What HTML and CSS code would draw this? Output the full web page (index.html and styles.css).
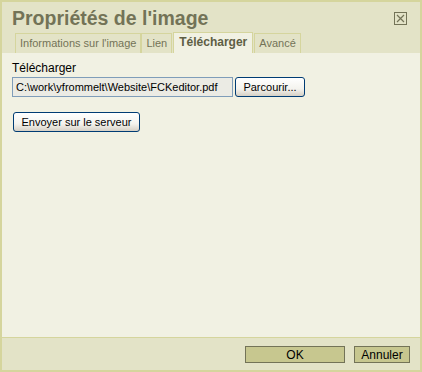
FILE: index.html
```html
<!DOCTYPE html>
<html lang="fr">
<head>
    <meta charset="UTF-8">
    <title>Propriétés de l'image</title>
    <link rel="stylesheet" href="styles.css">
</head>
<body>

    <div class="dialog">
        <div class="header">
            <h1>Propriétés de l'image</h1>
            <div class="close">
                <svg width="13" height="13" viewBox="0 0 13 13">
                    <rect x="0.5" y="0.5" width="12" height="12" fill="none" stroke="#737357"/>
                    <path d="M3 3 L10 10 M10 3 L3 10" stroke="#737357" stroke-width="1.2"/>
                </svg>
            </div>
        </div>

        <div class="tabs">
            <div class="tab">Informations sur l'image</div>
            <div class="tab">Lien</div>
            <div class="tab selected">Télécharger</div>
            <div class="tab">Avancé</div>
        </div>

        <div class="content">
            <label class="field-label">Télécharger</label>
            <div class="upload-row">
                <div class="file-input">C:\work\yfrommelt\Website\FCKeditor.pdf</div>
                <button class="xp-button browse">Parcourir...</button>
            </div>
            <button class="xp-button send">Envoyer sur le serveur</button>
        </div>

        <div class="footer">
            <button class="footer-button ok">OK</button>
            <button class="footer-button cancel">Annuler</button>
        </div>
    </div>

</body>
</html>
```

FILE: styles.css
```css
html, body {
    margin: 0;
    padding: 0;
}

body {
    font-family: 'Liberation Sans', Arial, sans-serif;
    font-size: 11px;
    color: #000;
}

.dialog {
    width: 422px;
    height: 372px;
    box-sizing: border-box;
    border: 2px solid #d5d59d;
    background-color: #e3e3c7;
    display: flex;
    flex-direction: column;
}

.header {
    display: flex;
    justify-content: space-between;
    height: 30px;
    padding: 0 13px 0 10px;
}

.header h1 {
    margin: 4px 0 0 0;
    font-size: 19.5px;
    font-weight: bold;
    color: #737357;
    line-height: 24px;
}

.close {
    margin-top: 10px;
    width: 13px;
    height: 13px;
}

.close svg {
    display: block;
}

.tabs {
    display: flex;
    align-items: flex-end;
    padding-left: 13px;
    height: 21px;
}

.tab {
    height: 20px;
    line-height: 19px;
    padding: 0 4px;
    border: 1px solid #d5d59d;
    border-bottom: none;
    color: #737357;
    font-size: 11px;
    box-sizing: border-box;
}

.tab.selected {
    height: 21px;
    background-color: #f1f1e3;
    font-weight: bold;
    font-size: 12px;
    color: #5e5e44;
    margin: 0 1px;
    padding: 0 5px;
}

.content {
    flex: 1;
    background-color: #f1f1e3;
    padding: 9px 10px 0 10px;
    border-bottom: 1px solid #d5d59d;
}

.field-label {
    display: block;
    color: #000;
    font-size: 12px;
    line-height: 13px;
    margin-bottom: 2px;
}

.upload-row {
    display: flex;
    gap: 2px;
    margin-bottom: 15px;
}

.file-input {
    width: 221px;
    height: 20px;
    box-sizing: border-box;
    border: 1px solid #7f9db9;
    background-color: #ebebe4;
    padding: 0 3px;
    line-height: 18px;
    font-size: 11px;
    color: #000;
    white-space: nowrap;
    overflow: hidden;
}

.xp-button {
    height: 20px;
    box-sizing: border-box;
    border: 1px solid #003c74;
    border-radius: 3px;
    background: linear-gradient(#ffffff, #f4f3ee 60%, #d6d0c5);
    font-family: 'Liberation Sans', Arial, sans-serif;
    font-size: 11px;
    color: #000;
    padding: 0;
    white-space: nowrap;
}

.browse {
    width: 70px;
}

.send {
    width: 127px;
    margin-left: 1px;
}

.footer {
    height: 32px;
    display: flex;
    justify-content: flex-end;
    align-items: flex-start;
    padding: 8px 10px 0 0;
    box-sizing: border-box;
    gap: 9px;
}

.footer-button {
    height: 17px;
    box-sizing: border-box;
    border: 1px solid #737357;
    background-color: #c7c78f;
    font-family: 'Liberation Sans', Arial, sans-serif;
    font-size: 12px;
    color: #000;
    padding: 0;
    line-height: 14px;
}

.ok {
    width: 100px;
}

.cancel {
    width: 56px;
}
```
